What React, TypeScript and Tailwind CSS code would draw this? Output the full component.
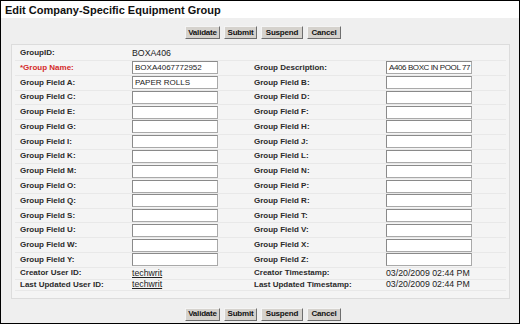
import React from 'react'

const FIELDS: [string, string, string, string][] = [
  ['Group Field A:', 'PAPER ROLLS', 'Group Field B:', ''],
  ['Group Field C:', '', 'Group Field D:', ''],
  ['Group Field E:', '', 'Group Field F:', ''],
  ['Group Field G:', '', 'Group Field H:', ''],
  ['Group Field I:', '', 'Group Field J:', ''],
  ['Group Field K:', '', 'Group Field L:', ''],
  ['Group Field M:', '', 'Group Field N:', ''],
  ['Group Field O:', '', 'Group Field P:', ''],
  ['Group Field Q:', '', 'Group Field R:', ''],
  ['Group Field S:', '', 'Group Field T:', ''],
  ['Group Field U:', '', 'Group Field V:', ''],
  ['Group Field W:', '', 'Group Field X:', ''],
  ['Group Field Y:', '', 'Group Field Z:', ''],
]

const BUTTONS = [
  { label: 'Validate', w: 'w-[35px]' },
  { label: 'Submit', w: 'w-[33px]' },
  { label: 'Suspend', w: 'w-[42px]' },
  { label: 'Cancel', w: 'w-[34px]' },
]

function ButtonBar() {
  return (
    <div className="flex gap-[4px] pl-[184px] h-[13px]">
      {BUTTONS.map(b => (
        <button
          key={b.label}
          className={`${b.w} h-[13px] flex items-center justify-center bg-[#d5d2cd] border border-t-[#f4f4f4] border-l-[#f4f4f4] border-r-[#6e6e6e] border-b-[#6e6e6e] text-[8px] font-bold text-[#111] leading-none tracking-[-0.2px]`}
        >
          {b.label}
        </button>
      ))}
    </div>
  )
}

function TextBox({ value, tight }: { value: string; tight?: boolean }) {
  return (
    <div className={`w-[86px] h-[13px] bg-white border border-[#a9a9a9] border-t-[#8a8a8a] border-l-[#8a8a8a] overflow-hidden whitespace-nowrap pl-[2px] text-[8px] leading-[11px] text-[#222] ${tight ? 'tracking-[-0.4px]' : ''}`}>
      {value}
    </div>
  )
}

function Row({ h, children }: { h: string; children: React.ReactNode }) {
  return (
    <div className={`grid grid-cols-[117px_122px_132px_1fr] items-center border-b border-[#e8e8e8] ${h}`}>
      {children}
    </div>
  )
}

const label = 'text-[8px] font-bold text-[#2a2a2a] leading-none whitespace-nowrap'
const left = 'pl-[5px]'
const value = 'text-[8.75px] text-[#222] leading-none whitespace-nowrap'

export default function App() {
  return (
    <div className="w-[520px] h-[324px] border border-black bg-[#efefef] overflow-hidden font-['Liberation_Sans',Arial,sans-serif]">
      <div className="h-[17px] bg-white pl-[4px] pt-[3px] text-[11px] font-bold leading-[12px] text-[#111]">
        Edit Company-Specific Equipment Group
      </div>

      <div className="mt-[8px]">
        <ButtonBar />
      </div>

      <div className="ml-[10px] mr-[9px] mt-[5px] border border-[#dcdcdc] bg-[#f4f4f4] px-[3px] pt-[1px] pb-[7px]">
        <Row h="h-[15px]">
          <div className={`${label} ${left}`}>GroupID:</div>
          <div className={value}>BOXA406</div>
          <div />
          <div />
        </Row>
        <Row h="h-[14.77px]">
          <div className={`${label} ${left} !text-[#d42a2a]`}>*Group Name:</div>
          <div><TextBox value="BOXA4067772952" /></div>
          <div className={label}>Group Description:</div>
          <div><TextBox value="A406 BOXC IN POOL 77" tight /></div>
        </Row>
        {FIELDS.map(([la, va, lb, vb]) => (
          <Row key={la} h="h-[14.77px]">
            <div className={`${label} ${left}`}>{la}</div>
            <div><TextBox value={va} /></div>
            <div className={label}>{lb}</div>
            <div><TextBox value={vb} /></div>
          </Row>
        ))}
        <Row h="h-[12px]">
          <div className={`${label} ${left}`}>Creator User ID:</div>
          <div className={`${value} text-[#2a5a9a] underline`}>techwrit</div>
          <div className={label}>Creator Timestamp:</div>
          <div className={value}>03/20/2009 02:44 PM</div>
        </Row>
        <Row h="h-[11px]">
          <div className={`${label} ${left}`}>Last Updated User ID:</div>
          <div className={`${value} text-[#2a5a9a] underline`}>techwrit</div>
          <div className={label}>Last Updated Timestamp:</div>
          <div className={value}>03/20/2009 02:44 PM</div>
        </Row>
      </div>

      <div className="mt-[9px]">
        <ButtonBar />
      </div>
    </div>
  )
}
